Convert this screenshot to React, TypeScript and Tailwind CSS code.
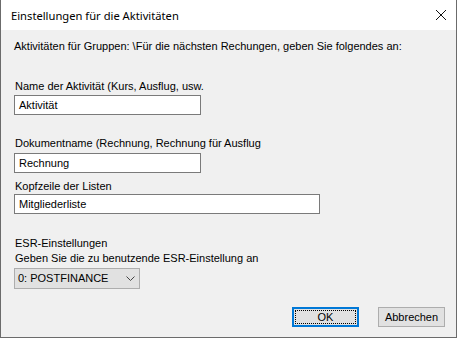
const body = "font-['Liberation_Sans',Arial,sans-serif] text-[11px] text-black";

function TextField({ value, width }: { value: string; width: string }) {
  return (
    <div
      className={`${width} h-[20px] ml-[13px] bg-white border border-[#7a7a7a] flex items-center pl-[4px] leading-[13px]`}
    >
      {value}
    </div>
  );
}

function Label({ children, className = "" }: { children: string; className?: string }) {
  return <div className={`h-[13px] leading-[13px] ml-[14px] ${className}`}>{children}</div>;
}

export default function App() {
  return (
    <div className={`w-[457px] h-[338px] flex flex-col border-x border-b border-[#6b6b6b] bg-[#f0f0f0] ${body}`}>
      {/* title bar */}
      <div className="h-[30px] bg-white flex items-center justify-between shrink-0">
        <span className="ml-[10px] mt-[1px] font-['Noto_Sans',sans-serif] text-[11.2px] leading-[16px] text-black">
          Einstellungen für die Aktivitäten
        </span>
        <svg width="12" height="12" viewBox="0 0 12 12" className="mr-[9px]">
          <path d="M1 1L11 11M11 1L1 11" stroke="#111" strokeWidth="1" fill="none" />
        </svg>
      </div>

      <div className="flex flex-col flex-1">
        <div className="h-[13px] leading-[13px] ml-[13px] mt-[10px]">
          Aktivitäten für Gruppen: \Für die nächsten Rechungen, geben Sie folgendes an:
        </div>

        <Label className="mt-[27px]">Name der Aktivität (Kurs, Ausflug, usw.</Label>
        <div className="mt-[2px]">
          <TextField value="Aktivität" width="w-[187px]" />
        </div>

        <Label className="mt-[22px]">Dokumentname (Rechnung, Rechnung für Ausflug</Label>
        <div className="mt-[3px]">
          <TextField value="Rechnung" width="w-[187px]" />
        </div>

        <Label className="mt-[7px]">Kopfzeile der Listen</Label>
        <div className="mt-[1px]">
          <TextField value="Mitgliederliste" width="w-[306px]" />
        </div>

        <Label className="mt-[23px]">ESR-Einstellungen</Label>
        <Label className="mt-[2px]">Geben Sie die zu benutzende ESR-Einstellung an</Label>

        <div className="mt-[3px] ml-[13px] w-[126px] h-[21px] bg-[#e1e1e1] border border-[#adadad] flex items-center justify-between pl-[3px] pr-[4px]">
          <span>0: POSTFINANCE</span>
          <svg width="9" height="5" viewBox="0 0 9 5">
            <path d="M0.5 0.5L4.5 4.5L8.5 0.5" stroke="#444" strokeWidth="1" fill="none" />
          </svg>
        </div>

        <div className="mt-auto mb-[10px] flex justify-end gap-[19px] mr-[11px]">
          <button className="w-[67px] h-[20px] bg-[#e1e1e1] border-2 border-[#0078d7] p-[1px] flex">
            <span className="flex-1 border border-dotted border-black flex items-center justify-center leading-[13px]">
              OK
            </span>
          </button>
          <button className="w-[67px] h-[20px] bg-[#e1e1e1] border border-[#adadad] flex items-center justify-center leading-[13px]">
            Abbrechen
          </button>
        </div>
      </div>
    </div>
  );
}
